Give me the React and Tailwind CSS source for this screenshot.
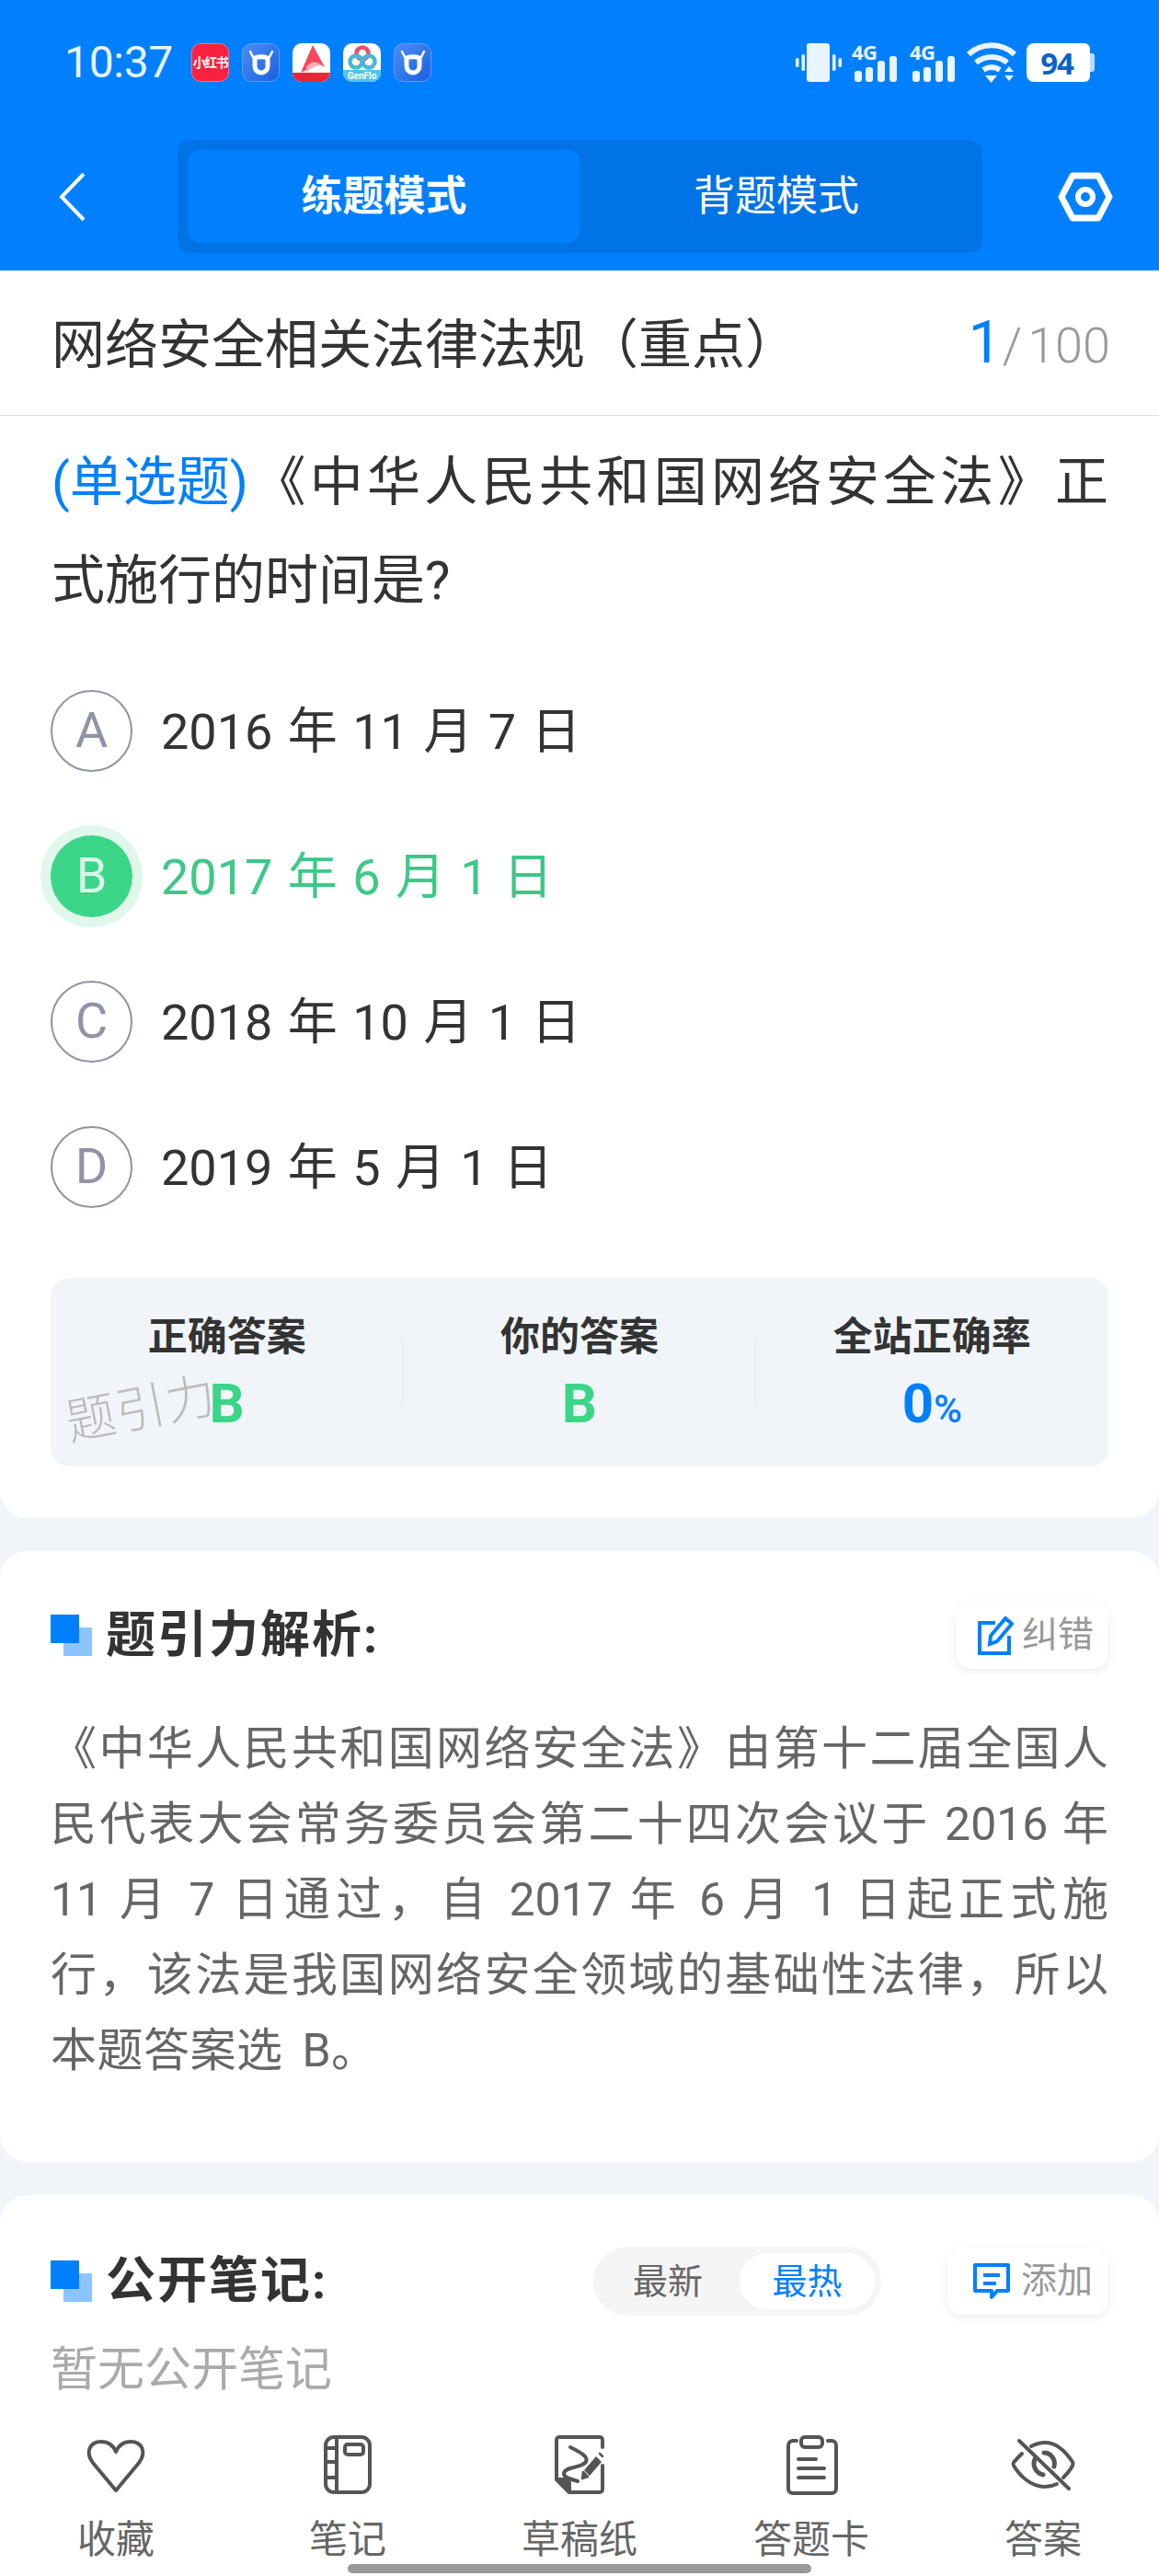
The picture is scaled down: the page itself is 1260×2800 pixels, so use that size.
const cjk = "font-['Roboto','Noto_Sans_CJK_SC',sans-serif]";

function AppDot({ className, children }) {
  return (
    <div className={"w-[41px] h-[42px] rounded-[10px] overflow-hidden flex items-center justify-center shrink-0 " + className}>
      {children}
    </div>
  );
}

function BullIcon() {
  return (
    <AppDot className="bg-gradient-to-br from-[#4a8df5] to-[#1c5fe0] border border-[#5f9cf8]">
      <svg width="30" height="30" viewBox="0 0 30 30" fill="none" stroke="#fff">
        <path d="M8 10v9a7 7 0 0 0 14 0v-9c-4-1.500-10-1.500-14 0z" strokeWidth="5" />
        <path d="M6 9 3 3M24 9l3-6" strokeWidth="2.500" strokeLinecap="round" />
      </svg>
    </AppDot>
  );
}

function StatusLeft() {
  return (
    <div className="flex items-center">
      <span className="text-[48px] leading-none text-[#e8f5ff] font-['Roboto',sans-serif] w-[138px] tracking-[-0.3px]">10:37</span>
      <div className="flex items-center gap-[14px]">
        <AppDot className="bg-[#f9213f] text-white text-[14px] font-bold leading-none tracking-[-1.500px] border border-[#ff6a80]">小红书</AppDot>
        <BullIcon />
        <AppDot className="bg-white flex-col justify-between">
          <svg width="30" height="30" viewBox="0 0 30 30" className="mt-[2px]">
            <path d="M16 0 L29 24 Q22 19 17 22 Q12 26 3 30 Z" fill="#f8475a" />
            <path d="M9 24 Q16 14 26 22 Q16 22 9 30 Z" fill="#fbb0b8" />
          </svg>
          <div className="w-full h-[10px] bg-[#e5273a]" />
        </AppDot>
        <AppDot className="bg-white flex-col justify-between">
          <svg width="32" height="28" viewBox="0 0 32 28" fill="none" strokeWidth="4.500">
            <circle cx="16" cy="10" r="6.500" stroke="#e8506a" />
            <circle cx="9" cy="19" r="6.500" stroke="#49b6d8" />
            <circle cx="23" cy="19" r="6.500" stroke="#49b6d8" />
          </svg>
          <div className="w-full h-[13px] bg-[#4fc3e8] text-white text-[10px] leading-[13px] text-center font-['Roboto',sans-serif] font-bold whitespace-nowrap">GenFlo</div>
        </AppDot>
        <BullIcon />
      </div>
    </div>
  );
}

function StatusRight() {
  const Signal = () => (
    <div className="relative w-[51px] h-[42px]">
      <span className="absolute left-0 top-[-3px] text-[22px] leading-[24px] font-bold text-[#e8f5ff] font-['Open_Sans',sans-serif] tracking-[-0.5px]">4G</span>
      <svg width="51" height="42" viewBox="0 0 51 42" fill="#e8f5ff" className="absolute left-0 top-0">
        <rect x="3" y="30" width="8" height="12" rx="3" />
        <rect x="15" y="26" width="8" height="16" rx="3" />
        <rect x="28" y="19" width="8" height="23" rx="3" />
        <rect x="41" y="14" width="8" height="28" rx="3" />
      </svg>
    </div>
  );
  return (
    <div className="flex items-center">
      <svg width="50" height="42" viewBox="0 0 50 42" fill="#e8f5ff" className="mr-[11px]">
        <rect x="12" y="0" width="25" height="42" rx="3" />
        <rect x="6.500" y="12" width="3.500" height="18" rx="1.500" />
        <rect x="0" y="16" width="3.500" height="10" rx="1.500" />
        <rect x="40" y="12" width="3.500" height="18" rx="1.500" />
        <rect x="46.500" y="16" width="3.500" height="10" rx="1.500" />
      </svg>
      <Signal />
      <div className="w-[12px]" />
      <Signal />
      <svg width="54" height="44" viewBox="0 0 54 44" fill="none" stroke="#e8f5ff" strokeWidth="6" className="ml-[11px]">
        <path d="M2 13C16 0 38 0 52 13" />
        <path d="M10 22c10-8 24-8 34 0" />
        <path d="M18 30c6-4 12-4 18 0" />
        <path d="M20 36h13l-6.500 8z" fill="#e8f5ff" stroke="none" />
        <path d="M41 32l5-6 5 6zM41 36l5 6 5-6z" fill="#e8f5ff" stroke="none" />
      </svg>
      <div className="flex items-center ml-[11px]">
        <div className="w-[69px] h-[42px] bg-white rounded-l-[8px] rounded-r-[6px] flex items-center justify-center text-[#0b62c4] text-[33px] font-bold leading-none font-['Open_Sans',sans-serif] tracking-[-1px] pr-[3px]">94</div>
        <div className="w-[5px] h-[20px] bg-[#bcdcff] rounded-r-[3px]" />
      </div>
    </div>
  );
}

function SectionMark() {
  return (
    <div className="relative w-[45px] h-[45px] shrink-0">
      <div className="absolute right-0 bottom-0 w-[31px] h-[31px] bg-[#8cc4ff]" />
      <div className="absolute left-0 top-0 w-[31px] h-[31px] bg-[#0080ff]" />
    </div>
  );
}

function ActionButton({ icon, label, className }) {
  return (
    <div className={"flex items-center bg-white rounded-[16px] shadow-[0_3px_10px_rgba(0,0,0,0.08)] text-[39px] leading-none text-[#999] " + className}>
      {icon}
      {label}
    </div>
  );
}

const options = [
  { key: "A", text: "2016 年 11 月 7 日" },
  { key: "B", text: "2017 年 6 月 1 日", active: true },
  { key: "C", text: "2018 年 10 月 1 日" },
  { key: "D", text: "2019 年 5 月 1 日" },
];

const analysis = [
  "《中华人民共和国网络安全法》由第十二届全国人",
  "民代表大会常务委员会第二十四次会议于 2016 年",
  "11 月 7 日通过，自 2017 年 6 月 1 日起正式施",
  "行，该法是我国网络安全领域的基础性法律，所以",
];

const tabs = [
  {
    label: "收藏",
    icon: (
      <path d="M32 60 7 30C-2 18 4 7 16 7c8 0 13 4 16 11 3-7 8-11 16-11 12 0 18 11 9 23z" />
    ),
  },
  {
    label: "笔记",
    icon: (
      <>
        <rect x="8" y="2" width="48" height="60" rx="9" />
        <path d="M20 2v60M8 14h12M8 29h12M8 46h12" />
        <rect x="29" y="10" width="20" height="11" rx="3" />
      </>
    ),
  },
  {
    label: "草稿纸",
    icon: (
      <>
        <path d="M57 13V5a3 3 0 0 0-3-3H10a3 3 0 0 0-3 3v43l14 14h33a3 3 0 0 0 3-3V33" />
        <path d="M7 48h10a4 4 0 0 1 4 4v10z" fill="#555" />
        <path d="M22 13c10 5 22 11 16 17-6 6-23 4-23 12 0 4 9 6 15 8" />
        <path d="M50 23l6 6-13 15-6-6z" fill="#555" stroke="none" />
        <path d="M36 40l5 5-6 2zM54 20l3 3" fill="#555" strokeWidth="2.500" />
      </>
    ),
  },
  {
    label: "答题卡",
    icon: (
      <>
        <path d="M16 6h-4a5 5 0 0 0-5 5v47a5 5 0 0 0 5 5h42a5 5 0 0 0 5-5V11a5 5 0 0 0-5-5h-4" />
        <rect x="21" y="2" width="23" height="11" rx="4" />
        <path d="M18 26h19M18 36h28M18 46h28" />
      </>
    ),
  },
  {
    label: "答案",
    icon: (
      <>
        <path d="M19 12C24 9.500 29 8 34 8c14 0 24 12 30 21q1 2 0 4c-2 4-6 9-10 13" />
        <path d="M9 20c-4 4-7 7-9 9.500q-1 1.500 0 3.500c6 10 18 23 34 23 4 0 9-1 13-3" />
        <path d="M23 26c-3 7 1 15 9 17M33 19c7 0 13 7 11 15" strokeWidth="5" />
        <path d="M6 6l54 52" />
      </>
    ),
  },
];

export default function App() {
  return (
    <div className={"relative w-[1260px] h-[2800px] overflow-hidden flex flex-col bg-[#f1f5f9] text-[#333] " + cjk}>
      <div className="bg-[#0080ff] h-[294px] shrink-0">
        <div className="h-[136px] pl-[70px] pr-[70px] flex items-center justify-between">
          <StatusLeft />
          <StatusRight />
        </div>
        <div className="flex items-start pt-[16px]">
          <div className="w-[193px] h-[123px] flex items-center pl-[64px]">
            <svg width="29" height="52" viewBox="0 0 29 52" fill="none" stroke="#fff" strokeWidth="4">
              <path d="M27 1 3 26l24 25" />
            </svg>
          </div>
          <div className="w-[875px] h-[123px] bg-[#0073e6] rounded-[14px] p-[11px] flex text-white text-[45px] leading-none">
            <div className="w-[427px] bg-[#0080ff] rounded-[14px] flex items-center justify-center font-bold">练题模式</div>
            <div className="flex-1 flex items-center justify-center">背题模式</div>
          </div>
          <div className="flex-1 h-[123px] flex items-center pl-[82px]">
            <svg width="60" height="54" viewBox="0 0 60 54" fill="none" stroke="#fff" strokeWidth="7" strokeLinejoin="round">
              <path d="M16 4h28l12 23-12 23H16L4 27z" />
              <circle cx="30" cy="27" r="8" strokeWidth="6" />
            </svg>
          </div>
        </div>
      </div>

      <div className="bg-white rounded-b-[30px] h-[1356px] shrink-0">
        <div className="h-[158px] border-b border-[#ddd] flex items-center justify-between pl-[56px] pr-[53px]">
          <div className="text-[58px] leading-none pt-[4px]">网络安全相关法律法规（重点）</div>
          <div className="flex items-baseline leading-none font-['Roboto',sans-serif] text-[#999] text-[54px] font-light">
            <span className="text-[64px] text-[#0080ff] font-normal mr-[1px]">1</span>/<span className="ml-[6px]">100</span>
          </div>
        </div>

        <div className="pl-[56px] pt-[19px] text-[58px] leading-[107px] pr-[55px]">
          <div className="[text-align:justify] [text-align-last:justify]">
            <span className="inline-block text-[#0080ff]">(单选题)</span>《中华人民共和国网络安全法》正
          </div>
          <div>式施行的时间是?</div>
        </div>

        <div className="mt-[30px] px-[55px]">
          {options.map((o) => (
            <div key={o.key} className="h-[158px] flex items-center">
              <div
                className={
                  o.active
                    ? "w-[89px] h-[89px] rounded-full bg-[#3bd587] text-[#d9f7e8] ring-[11px] ring-[#e0f7ec] flex items-center justify-center text-[54px] leading-none"
                    : "w-[89px] h-[89px] rounded-full border-2 border-[#9093a6] text-[#9093a6] flex items-center justify-center text-[54px] leading-none"
                }
              >
                {o.key}
              </div>
              <div className={"ml-[31px] pt-[3px] text-[54px] leading-none [word-spacing:3px] " + (o.active ? "text-[#3dc886]" : "text-[#333]")}>
                {o.text}
              </div>
            </div>
          ))}
        </div>

        <div className="relative mx-[55px] mt-[42px] h-[205px] bg-[#f1f5f9] rounded-[20px] flex pt-[42px]">
          {[
            { label: "正确答案", value: "B" },
            { label: "你的答案", value: "B" },
            { label: "全站正确率", value: "0" },
          ].map((c, i) => (
            <div key={c.label} className={"relative flex-1 flex flex-col items-center"}>
              <div className="text-[43px] leading-[44px] font-bold text-[#333]">{c.label}</div>
              <div className={"mt-[21px] text-[60px] leading-[60px] font-bold " + (i === 2 ? "text-[#0080ff]" : "text-[#3bd587]")}>
                {c.value}
                {i === 2 && <span className="text-[42px] font-medium">%</span>}
              </div>
              {i < 2 && <div className="absolute right-0 top-[24px] w-[1px] h-[72px] bg-[#e6e9ee]" />}
            </div>
          ))}
          <div className="absolute left-[16px] top-[116px] text-[54px] leading-none font-light text-[#bbb] tracking-[1px] -rotate-[11deg]">题引力</div>
        </div>
      </div>

      <div className="mt-[36px] bg-white rounded-[30px] h-[664px] shrink-0 px-[55px] pt-[55px]">
        <div className="flex items-center justify-between h-[73px]">
          <div className="flex items-center">
            <SectionMark />
            <div className="ml-[15px] text-[54px] leading-none font-bold tracking-[2px]">题引力解析:</div>
          </div>
          <ActionButton
            className="w-[166px] h-[73px] pl-[23px]"
            label={<span className="ml-[9px]">纠错</span>}
            icon={
              <svg width="40" height="44" viewBox="0 0 40 44" fill="none" stroke="#0080ff" strokeWidth="4" className="shrink-0">
                <path d="M20 8H3v33h32V22" />
                <path d="M31 3l7 6-16 19-8 3 1-9z" />
              </svg>
            }
          />
        </div>
        <div className="mt-[46px] text-[50px] leading-[82px] text-[#666]">
          {analysis.map((line) => (
            <div key={line} className="[text-align:justify] [text-align-last:justify]">{line}</div>
          ))}
          <div className="tracking-[0.5px] [word-spacing:8px]">本题答案选 B。</div>
        </div>
      </div>

      <div className="relative mt-[36px] flex-1 bg-white rounded-t-[30px] px-[55px] pt-[56px]">
        <div className="flex items-center h-[75px]">
          <SectionMark />
          <div className="ml-[15px] text-[54px] leading-none font-bold tracking-[2px]">公开笔记:</div>
          <div className="ml-auto w-[313px] h-[75px] rounded-full bg-[#f5f5f5] flex items-center text-[38px] leading-none p-[7px] justify-end">
            <span className="mr-[40px] text-[#666]">最新</span>
            <div className="w-[147px] h-[61px] bg-white rounded-full text-[#0080ff] flex items-center justify-center">最热</div>
          </div>
          <ActionButton
            className="ml-[72px] w-[175px] h-[73px] pl-[27px]"
            label={<span className="ml-[11px]">添加</span>}
            icon={
              <svg width="42" height="42" viewBox="0 0 42 42" fill="none" stroke="#0080ff" strokeWidth="4" className="shrink-0">
                <path d="M3 3h36v28H27l-6 7v-7H3z" strokeLinejoin="round" />
                <path d="M12 14h18M12 23h14" />
              </svg>
            }
          />
        </div>
        <div className="mt-[29px] text-[51px] leading-[60px] text-[#aaa]">暂无公开笔记</div>

        <div className="absolute left-0 right-0 bottom-0 h-[174px] bg-white grid grid-cols-5 pt-[21px]">
          {tabs.map((t) => (
            <div key={t.label} className="flex flex-col items-center">
              <svg width="64" height="64" viewBox="0 0 64 64" fill="none" stroke="#555" strokeWidth="4" strokeLinecap="round" strokeLinejoin="round" className="overflow-visible">
                {t.icon}
              </svg>
              <div className="mt-[24px] text-[42px] leading-[52px] text-[#666]">{t.label}</div>
            </div>
          ))}
        </div>
      </div>

      <div className="absolute left-[378px] bottom-[3px] w-[504px] h-[10px] rounded-full bg-[#999]" />
    </div>
  );
}
